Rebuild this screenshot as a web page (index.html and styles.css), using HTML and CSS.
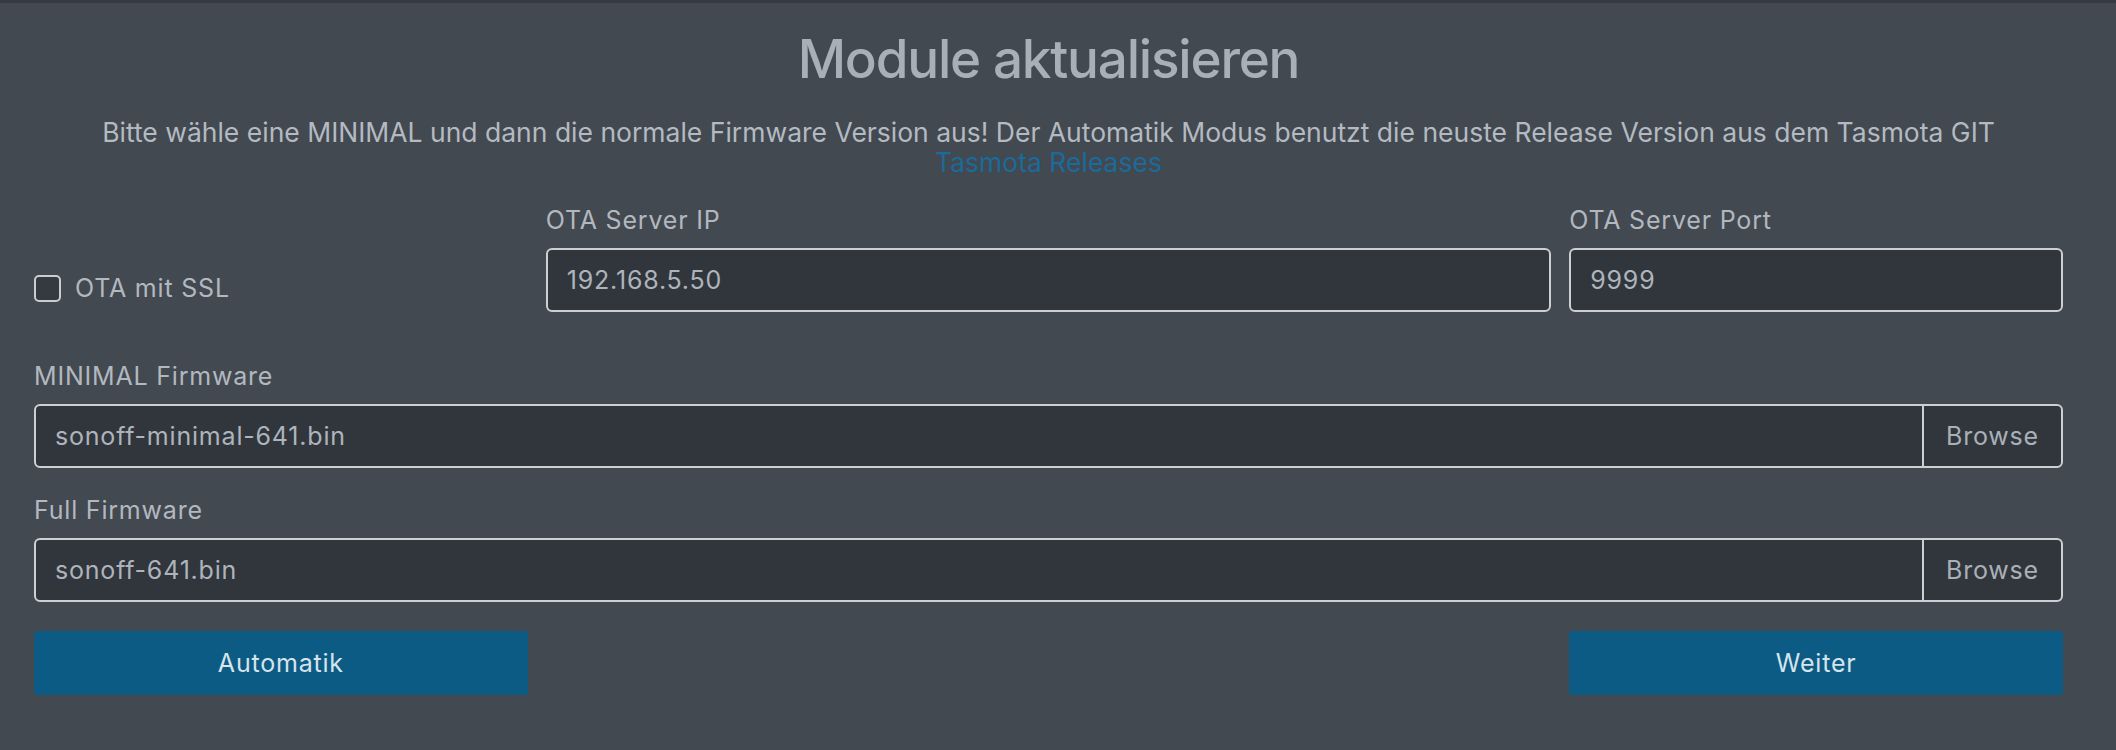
FILE: index.html
```html
<!DOCTYPE html>
<html lang="de">
<head>
<meta charset="utf-8">
<title>Module aktualisieren</title>
<link rel="stylesheet" href="styles.css">
</head>
<body>
<main class="container">
  <h1 class="title">Module aktualisieren</h1>
  <p class="intro">Bitte wähle eine MINIMAL und dann die normale Firmware Version aus! Der Automatik Modus benutzt die neuste Release Version aus dem Tasmota GIT<br><a class="link" href="#">Tasmota Releases</a></p>

  <div class="grid ota-row">
    <div class="check-cell">
      <label class="check">
        <span class="check-box"></span>
        <span class="check-label">OTA mit SSL</span>
      </label>
    </div>
    <div class="field span-2">
      <label class="field-label">OTA Server IP</label>
      <div class="input">192.168.5.50</div>
    </div>
    <div class="field">
      <label class="field-label">OTA Server Port</label>
      <div class="input">9999</div>
    </div>
  </div>

  <div class="field file-field first-file">
    <label class="field-label">MINIMAL Firmware</label>
    <div class="file-group">
      <div class="file-name">sonoff-minimal-641.bin</div>
      <div class="file-browse">Browse</div>
    </div>
  </div>

  <div class="field file-field">
    <label class="field-label">Full Firmware</label>
    <div class="file-group">
      <div class="file-name">sonoff-641.bin</div>
      <div class="file-browse">Browse</div>
    </div>
  </div>

  <div class="grid actions">
    <button class="btn">Automatik</button>
    <span class="span-2"></span>
    <button class="btn">Weiter</button>
  </div>
</main>
</body>
</html>
```

FILE: styles.css
```css
* { box-sizing: border-box; }

html, body {
  margin: 0;
  height: 100%;
}

body {
  background: #434950;
  border-top: 3px solid #353a40;
  font-family: "Inter", "Noto Sans", sans-serif;
  font-size: 25px;
  line-height: 36px;
  letter-spacing: 0.8px;
  color: #b2b8bf;
}

.container {
  padding: 0 53px 0 34px;
}

.title {
  margin: 23px 0 0;
  text-align: center;
  font-size: 53px;
  line-height: 66px;
  font-weight: 500;
  color: #a8afb8;
  letter-spacing: -1.2px;
}

.intro {
  margin: 25px 0 0;
  text-align: center;
  font-size: 26.5px;
  line-height: 30px;
  letter-spacing: 0;
  color: #b4bac1;
}

.link {
  color: #1a6a9a;
  text-decoration: none;
}

.grid {
  display: grid;
  grid-template-columns: repeat(4, 1fr);
  column-gap: 18px;
}

.span-2 {
  grid-column: span 2;
}

.ota-row {
  margin-top: 25px;
}

.check-cell {
  display: flex;
  align-items: flex-end;
  padding-bottom: 6px;
}

.check {
  display: flex;
  align-items: center;
  gap: 14px;
}

.check-box {
  width: 27px;
  height: 27px;
  border: 2px solid #c9cdd2;
  border-radius: 5px;
  background: #343a41;
}

.check-label {
  color: #b2b8bf;
}

.field {
  display: flex;
  flex-direction: column;
}

.field-label {
  margin-bottom: 10px;
  color: #b2b8bf;
}

.input,
.file-group {
  height: 64px;
  border: 2px solid #cbd0d5;
  border-radius: 6px;
  background: #31363d;
  color: #aeb4bb;
}

.input {
  display: flex;
  align-items: center;
  padding: 0 19px;
}

.first-file {
  margin-top: 46px;
}

.file-field + .file-field {
  margin-top: 24px;
}

.file-group {
  display: flex;
}

.file-name {
  flex: 1;
  display: flex;
  align-items: center;
  padding: 0 19px;
}

.file-browse {
  width: 139px;
  display: flex;
  align-items: center;
  justify-content: center;
  border-left: 2px solid #cbd0d5;
  color: #a9b0b7;
}

.actions {
  margin-top: 29px;
}

.btn {
  height: 64px;
  border: 0;
  border-radius: 3px;
  background: #0c5b84;
  color: #d6e4ec;
  font: inherit;
  letter-spacing: 0.8px;
  padding: 0;
}
```
